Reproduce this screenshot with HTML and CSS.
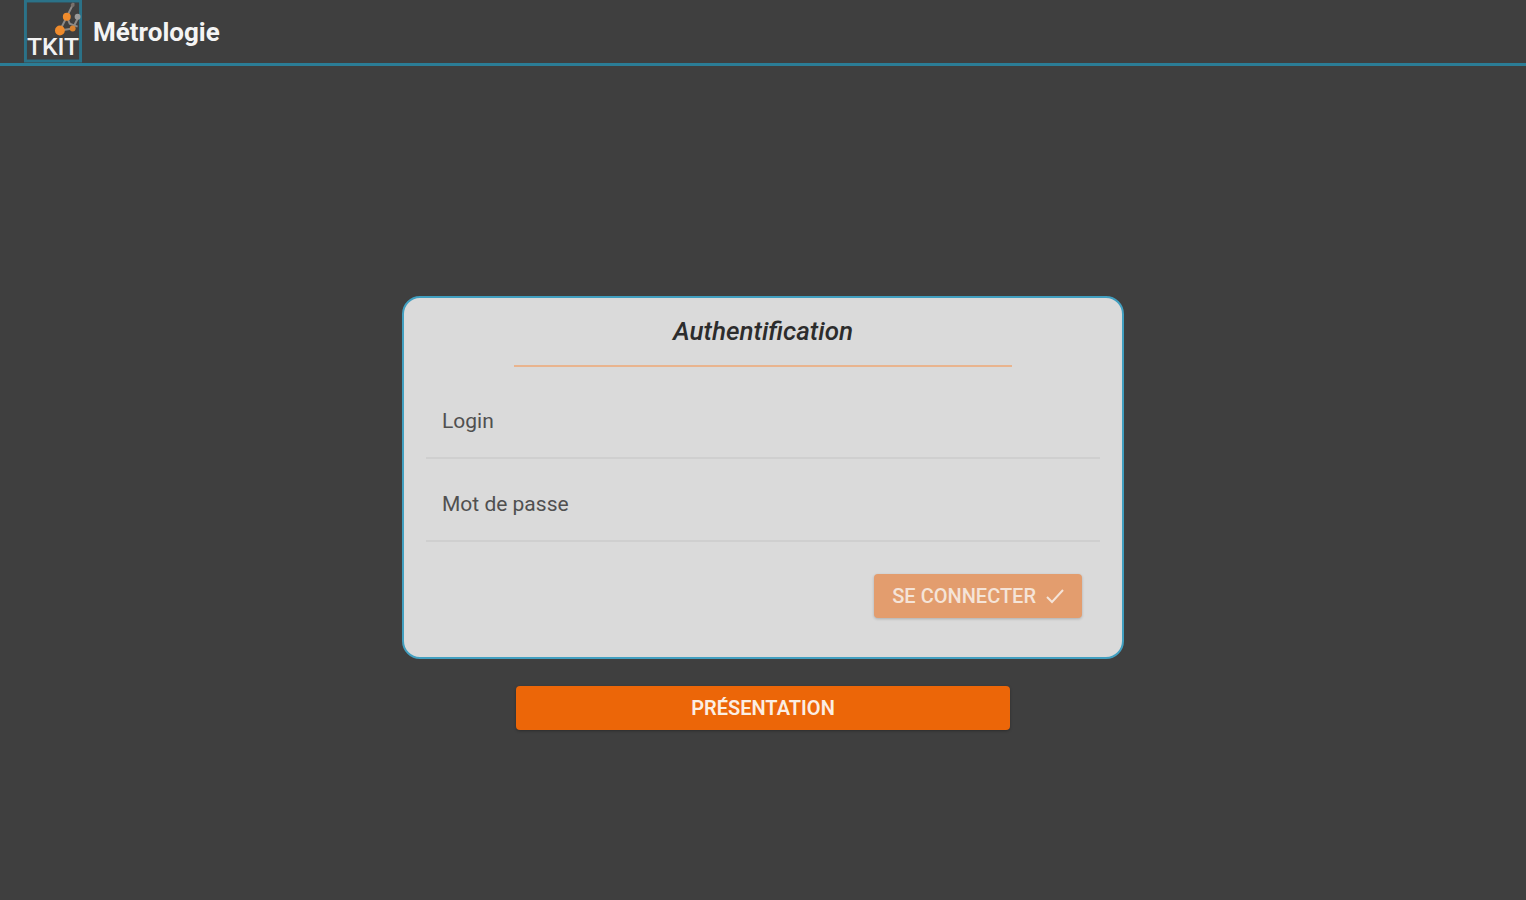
FILE: index.html
```html
<!DOCTYPE html>
<html lang="fr">
<head>
    <meta charset="UTF-8">
    <meta name="viewport" content="width=device-width, initial-scale=1.0">
    <title>Métrologie</title>
    <link rel="stylesheet" href="styles.css">
</head>
<body>
    <header class="header">
        <svg class="logo" viewBox="0 0 60 64" role="img" aria-label="TKIT">
            <rect x="2" y="1" width="56" height="61" fill="none" stroke="#2b7288" stroke-width="3"/>
            <path d="M37 31L44 17L51 3M37 31L50 29L56 17M44 17L47 24L55 27" fill="none" stroke="#8c8986" stroke-width="2"/>
            <circle cx="37" cy="31" r="5" fill="#ef8b2c"/>
            <circle cx="44" cy="17" r="4" fill="#ef8b2c"/>
            <circle cx="50" cy="29" r="3" fill="#d9822f"/>
            <circle cx="50" cy="5" r="2" fill="#77706b"/>
            <circle cx="55" cy="17" r="3" fill="#9a9a9a"/>
            <text class="logo-text" x="30" y="56" text-anchor="middle">TKIT</text>
        </svg>
        <h1>Métrologie</h1>
    </header>
    <main class="content">
        <section class="card">
            <h2>Authentification</h2>
            <form id="login-form">
                <div class="form-element">
                    <label for="login">Login</label>
                    <input type="text" name="login" id="login">
                </div>
                <div class="form-element">
                    <label for="password">Mot de passe</label>
                    <input type="password" name="password" id="password">
                </div>
                <button type="submit" class="btn btn-submit" disabled>
                    SE CONNECTER
                    <svg class="check" viewBox="0 0 18 16" aria-hidden="true">
                        <path d="M1 9L6 14L17 2" fill="none" stroke="currentColor" stroke-width="2"/>
                    </svg>
                </button>
            </form>
        </section>
        <button type="button" class="btn btn-presentation">PRÉSENTATION</button>
    </main>
</body>
</html>
```
FILE: styles.css
```css
*{
    padding: 0;
    margin: 0;
    box-sizing: border-box;
}
body{
    min-height: 100vh;
    display: flex;
    flex-direction: column;
    background: #3f3f3f;
    font-family: Roboto, sans-serif;
}
.header{
    display: flex;
    align-items: center;
    gap: 10px;
    padding-left: 23px;
    border-bottom: 3px solid #2b7d96;
}
.logo{
    width: 60px;
    height: 63px;
}
.logo-text{
    font-size: 25px;
    font-weight: 500;
    fill: #f2f2f2;
}
h1{
    color: #f4f4f4;
    font-size: 26px;
    font-weight: 700;
}
.content{
    flex: 1;
    display: flex;
    flex-direction: column;
    align-items: center;
    justify-content: center;
    gap: 27px;
    padding: 60px 16px 0;
}
.card{
    width: 100%;
    max-width: 722px;
    padding: 15px 22px 39px;
    background: #dadada;
    border: 2px solid #419fc0;
    border-radius: 18px;
}
h2{
    width: 74%;
    margin: 0 auto;
    padding-bottom: 16px;
    border-bottom: 2px solid #e9b48e;
    color: #2c2c2c;
    font-size: 26px;
    font-weight: 500;
    font-style: italic;
    line-height: 36px;
    text-align: center;
}
form{
    display: flex;
    flex-direction: column;
    margin-top: 9px;
}
.form-element{
    display: flex;
    align-items: center;
    height: 83px;
    padding: 8px 16px 0;
    border-bottom: 2px solid #cfcfcf;
}
label{
    color: #505050;
    font-size: 21px;
}
input{
    flex: 1;
    min-width: 0;
    height: 48px;
    margin-left: 16px;
    background: transparent;
    border: none;
    outline: none;
    font: inherit;
    font-size: 21px;
}
.btn{
    display: flex;
    align-items: center;
    justify-content: center;
    height: 44px;
    border: none;
    border-radius: 4px;
    background: #ec6608;
    color: #fbeee3;
    font-family: inherit;
    font-size: 20px;
    font-weight: 500;
    cursor: pointer;
}
.btn-submit{
    align-self: flex-end;
    gap: 10px;
    margin: 32px 18px 0 0;
    padding: 0 18px;
    background: #e39d6e;
    color: #f5e4d8;
    box-shadow: 0 1px 3px rgba(0, 0, 0, 0.2);
    cursor: default;
}
.check{
    width: 18px;
    height: 16px;
}
.btn-presentation{
    width: 100%;
    max-width: 494px;
    font-weight: 600;
    box-shadow: 0 1px 3px rgba(0, 0, 0, 0.3);
}
```
